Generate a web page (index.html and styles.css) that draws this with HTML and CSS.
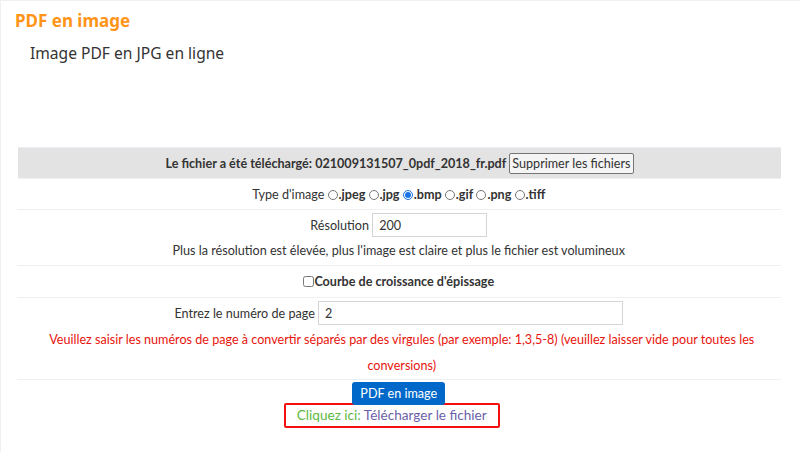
FILE: index.html
```html
<!DOCTYPE html>
<html>

<head>
    <meta name="viewport" content="width=device-width, initial-scale=1">
    <title>PDF en image</title>
    <link rel="stylesheet" href="styles.css">
</head>

<body>
    <div id="container">
        <h1 class="tool-title">PDF en image</h1>
        <h2 class="tool-subtitle">Image PDF en JPG en ligne</h2>

        <table class="convert-table">
            <tr class="row-uploaded">
                <td>
                    <b>Le fichier a été téléchargé: 021009131507_0pdf_2018_fr.pdf</b><button class="delete-button" type="button">Supprimer les fichiers</button>
                </td>
            </tr>
            <tr class="row-type">
                <td>
                    Type d'image
                    <label><input type="radio" name="type">.jpeg</label>
                    <label><input type="radio" name="type">.jpg</label>
                    <label><input type="radio" name="type" checked>.bmp</label>
                    <label><input type="radio" name="type">.gif</label>
                    <label><input type="radio" name="type">.png</label>
                    <label><input type="radio" name="type">.tiff</label>
                </td>
            </tr>
            <tr class="row-resolution">
                <td>
                    <div class="field-line">Résolution <input class="text-input resolution-input" type="text" value="200"></div>
                    <div class="hint">Plus la résolution est élevée, plus l'image est claire et plus le fichier est volumineux</div>
                </td>
            </tr>
            <tr class="row-curve">
                <td>
                    <label class="curve-label"><input type="checkbox">Courbe de croissance d'épissage</label>
                </td>
            </tr>
            <tr class="row-pages">
                <td>
                    <div class="field-line">Entrez le numéro de page <input class="text-input page-input" type="text" value="2"></div>
                    <div class="warning">Veuillez saisir les numéros de page à convertir séparés par des virgules (par exemple: 1,3,5-8) (veuillez laisser vide pour toutes les conversions)</div>
                </td>
            </tr>
            <tr class="row-submit">
                <td>
                    <button class="convert-button" type="button">PDF en image</button>
                    <div class="download-line">
                        <div class="download-box">
                            <span class="click-here">Cliquez ici:</span> <a class="download-link" href="#">Télécharger le fichier</a>
                        </div>
                    </div>
                </td>
            </tr>
        </table>
    </div>
</body>

</html>
```

FILE: styles.css
```css
body {
    margin: 0;
    font-family: Lato, "Noto Sans", sans-serif;
    font-size: 12.6px;
    color: #333;
    background: #fff;
}

#container {
    height: 452px;
    box-sizing: border-box;
    border-top: 1px solid #f0f0f0;
    border-left: 1px solid #f0f0f0;
    padding: 0 19px 0 14px;
}

.tool-title {
    margin: 8px 0 0 0;
    font-family: "Noto Sans", sans-serif;
    font-size: 17px;
    font-weight: bold;
    color: #ff9416;
    line-height: 24px;
}

.tool-subtitle {
    margin: 8px 0 0 15px;
    font-family: "Noto Sans", sans-serif;
    font-size: 15.6px;
    font-weight: normal;
    color: #333;
    line-height: 24px;
}

.convert-table {
    width: 100%;
    margin-top: 82px;
    border-collapse: collapse;
    border-top: 1px solid #e8eef4;
}

.convert-table td {
    text-align: center;
    border-bottom: 1px solid #edf1f5;
    padding: 0;
}

.row-uploaded td {
    background: #e3e3e3;
    height: 30px;
    border-left: 3px solid #fff;
}

.delete-button {
    font-family: inherit;
    font-size: 12.6px;
    color: #333;
    background: #f4f4f4;
    border: 1px solid #767676;
    border-radius: 2px;
    padding: 2px 2px;
    margin-left: 3px;
}

.row-type td {
    height: 30px;
}

.row-type label,
.curve-label {
    font-weight: bold;
}

.row-type input[type="radio"] {
    width: 10px;
    height: 10px;
    margin: 0 1px 0 0;
    vertical-align: -1px;
}

.row-type input[type="radio"]:checked {
    accent-color: #1a73e8;
}

.row-resolution td {
    height: 53px;
}

.field-line {
    padding-top: 3px;
}

.text-input {
    font-family: inherit;
    font-size: 12.6px;
    color: #333;
    border: 1px solid #d5d5d5;
    padding: 3px 6px;
    height: 24px;
    box-sizing: border-box;
    outline: none;
}

.resolution-input {
    width: 115px;
}

.page-input {
    width: 305px;
}

.hint {
    line-height: 28px;
}

.row-curve td {
    height: 31px;
}

.curve-label input {
    width: 11px;
    height: 11px;
    margin: 0;
    vertical-align: -1px;
}

.row-pages td {
    height: 79px;
}

.warning {
    color: #e8140c;
    line-height: 26px;
    padding: 2px 12px 0 18px;
}

.row-submit td {
    border-bottom: none;
    padding-top: 2px;
}

.convert-button {
    position: relative;
    font-family: inherit;
    font-size: 12.6px;
    color: #fff;
    background: #0068c9;
    border: none;
    border-radius: 3px;
    padding: 0 8px;
    height: 23px;
}

.download-line {
    padding-right: 14px;
    margin-top: -2px;
}

.download-box {
    width: fit-content;
    margin: 0 auto;
    border: 2px solid #f41010;
    border-radius: 2px;
    padding: 0 11px;
    line-height: 21px;
    font-size: 13.6px;
}

.click-here {
    color: #5db93f;
}

.download-link {
    color: #6a5fa8;
    text-decoration: none;
}
```
